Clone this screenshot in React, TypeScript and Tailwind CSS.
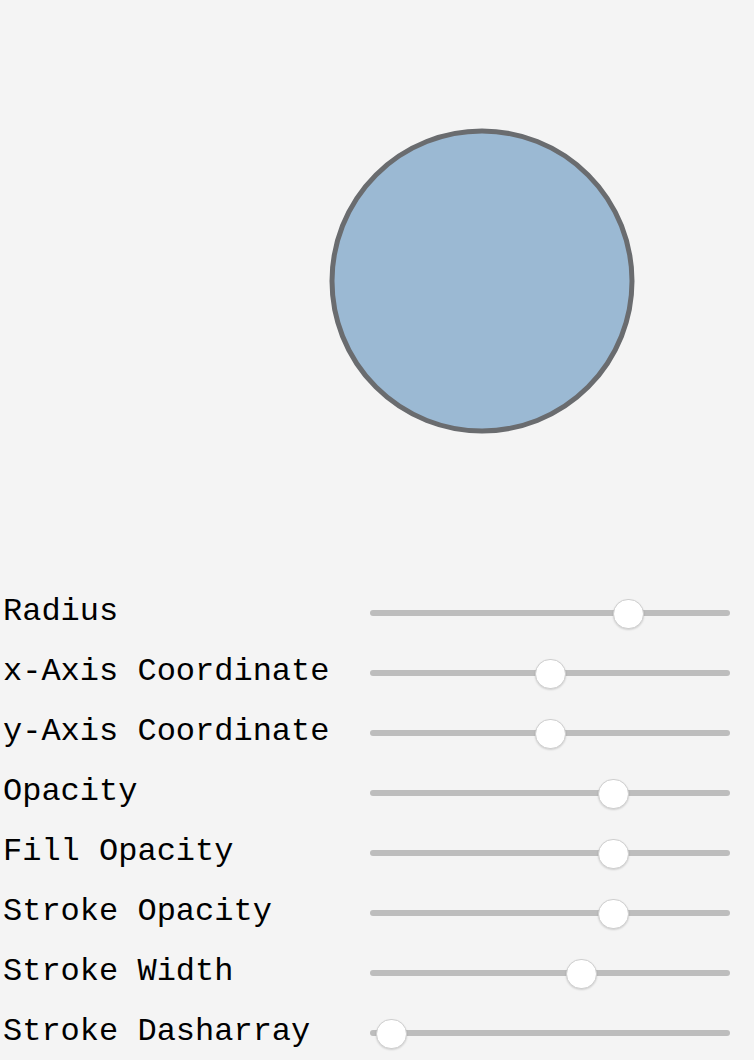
const controls = [
  { label: "Radius", value: 0.74 },
  { label: "x-Axis Coordinate", value: 0.5 },
  { label: "y-Axis Coordinate", value: 0.5 },
  { label: "Opacity", value: 0.693 },
  { label: "Fill Opacity", value: 0.693 },
  { label: "Stroke Opacity", value: 0.693 },
  { label: "Stroke Width", value: 0.597 },
  { label: "Stroke Dasharray", value: 0.018 },
];

function Slider({ value }: { value: number }) {
  return (
    <div className="relative mt-[2px] h-[31px] w-[360px]">
      <div className="absolute left-0 right-0 top-[12px] h-[6px] rounded-full bg-[#bdbdbd]" />
      <div
        className="absolute top-[1px] h-[30px] w-[31px] rounded-full border border-[#cfcfcf] bg-white shadow-[0_1px_2px_rgba(0,0,0,0.15)]"
        style={{ left: `${value * 329}px` }}
      />
    </div>
  );
}

export default function App() {
  return (
    <div className="h-[1060px] w-[754px] overflow-hidden bg-[#f4f4f4] font-['Liberation_Mono','Courier_New',monospace] text-black">
      <svg width="754" height="582" className="block">
        <circle cx="482" cy="281" r="150" fill="#9bb9d3" stroke="#6a6c6f" strokeWidth="5" />
      </svg>
      <div className="flex flex-col">
        {controls.map((c) => (
          <div key={c.label} className="flex h-[60px] items-center">
            <div className="w-[370px] pl-[3px] text-[32px] leading-none">{c.label}</div>
            <Slider value={c.value} />
          </div>
        ))}
      </div>
    </div>
  );
}
